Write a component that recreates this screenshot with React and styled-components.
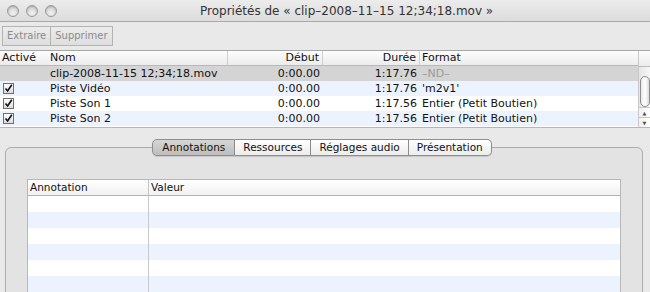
import styled, { createGlobalStyle } from 'styled-components'

const GlobalStyle = createGlobalStyle`
    html, body {
        margin: 0;
        padding: 0;
        background: #e8e8e8;
    }
    body {
        font-family: "DejaVu Sans", "Liberation Sans", sans-serif;
        color: #111;
    }
`

const Window = styled.div`
    width: 650px;
    height: 292px;
    overflow: hidden;
    background: #e8e8e8;
    display: flex;
    flex-direction: column;
`

const TitleBar = styled.div`
    height: 21px;
    display: flex;
    align-items: center;
    background: linear-gradient(#ececec, #dcdcdc);
    border-bottom: 1px solid #a9a9a9;
    padding: 1px 0 0 7px;
    box-sizing: border-box;
    height: 22px;
`

const Lights = styled.div`
    display: flex;
    gap: 7px;
`

const Light = styled.span`
    width: 10px;
    height: 10px;
    border-radius: 50%;
    border: 1px solid #9a9a9a;
    background: radial-gradient(circle at 50% 70%, #f4f4f4, #cfcfcf 70%, #bdbdbd);
    box-shadow: inset 0 1px 1px rgba(0, 0, 0, 0.15);
`

const Title = styled.div`
    flex: 1;
    padding-left: 143px;
    font-size: 12px;
    color: #333;
    white-space: nowrap;
`

const Toolbar = styled.div`
    height: 29px;
    display: flex;
    align-items: flex-start;
    padding: 4px 0 0 2px;
    box-sizing: border-box;
    background: #e9e9e9;
    border-bottom: 1px solid #a6a6a6;
`

const ButtonGroup = styled.div`
    display: flex;
    border: 1px solid #b3b3b3;
    background: linear-gradient(#ececec, #dedede);
`

const ToolButton = styled.span`
    height: 18px;
    line-height: 18px;
    padding: 0 ${(p) => p.$pad}px;
    font-size: 10px;
    color: #8c8c8c;
    border-left: ${(p) => (p.$first ? 'none' : '1px solid #b3b3b3')};
`

const Tracks = styled.div`
    display: flex;
    height: 76px;
    background: #fff;
    border-bottom: 1px solid #b6b6b6;
`

const TrackTable = styled.div`
    width: 638px;
    display: grid;
    grid-template-columns: 48px 180px 95px 97px 218px;
    grid-auto-rows: 15px;
    font-size: 11px;
    line-height: 15px;
`

const HeadCell = styled.div`
    background: linear-gradient(#fdfdfd, #ececec);
    border-bottom: 1px solid #b9b9b9;
    border-right: ${(p) => (p.$sep ? '1px solid #cfcfcf' : 'none')};
    padding: 0 ${(p) => (p.$right ? '3px' : '0')} 0 ${(p) => (p.$right ? '0' : p.$indent || 2)}px;
    text-align: ${(p) => (p.$right ? 'right' : 'left')};
    white-space: nowrap;
    overflow: hidden;
    line-height: 14px;
`

const Cell = styled.div`
    background: ${(p) => p.$bg};
    color: ${(p) => p.$color || '#111'};
    text-align: ${(p) => (p.$right ? 'right' : 'left')};
    padding: ${(p) => (p.$right ? '0 3px 0 0' : `0 0 0 ${p.$indent || 2}px`)};
    white-space: nowrap;
    overflow: hidden;
    display: flex;
    align-items: center;
    justify-content: ${(p) => (p.$right ? 'flex-end' : 'flex-start')};
`

const Check = styled.span`
    width: 9px;
    height: 9px;
    margin-left: 1px;
    border: 1px solid #6f6f6f;
    background: linear-gradient(#ffffff, #dcdcdc);
    display: flex;
    align-items: center;
    justify-content: center;
`

const Scrollbar = styled.div`
    width: 12px;
    display: flex;
    flex-direction: column;
    border-left: 1px solid #c8c8c8;
    background: #f2f2f2;
`

const ScrollCorner = styled.div`
    height: 15px;
    background: linear-gradient(#fdfdfd, #ececec);
    border-bottom: 1px solid #b9b9b9;
`

const ScrollTrack = styled.div`
    flex: 1;
    padding-top: 9px;
    display: flex;
    justify-content: center;
    background: linear-gradient(90deg, #e6e6e6, #f7f7f7);
`

const Thumb = styled.div`
    width: 8px;
    height: 29px;
    border-radius: 5px;
    border: 1px solid #8d8d8d;
    background: linear-gradient(90deg, #e9e9e9, #ffffff 50%, #dcdcdc);
`

const Arrow = styled.div`
    height: 9px;
    display: flex;
    align-items: center;
    justify-content: center;
    border-top: 1px solid #c6c6c6;
    background: linear-gradient(90deg, #f0f0f0, #ffffff);
    font-size: 5px;
    color: #555;
`

const Lower = styled.div`
    flex: 1;
    padding: 11px 7px 0 5px;
    background: #e9e9e9;
    overflow: hidden;
`

const TabStrip = styled.div`
    display: flex;
    justify-content: center;
    position: relative;
    z-index: 1;
    padding-right: 4px;
`

const Tab = styled.div`
    height: 15px;
    line-height: 15px;
    padding: 0 ${(p) => p.$pad}px;
    font-size: 10.5px;
    color: #111;
    border: 1px solid #8e8e8e;
    border-left: ${(p) => (p.$first ? '1px solid #8e8e8e' : 'none')};
    border-radius: ${(p) => (p.$first ? '5px 0 0 5px' : p.$last ? '0 5px 5px 0' : '0')};
    background: ${(p) =>
        p.$active ? 'linear-gradient(#d6d6d6, #bdbdbd)' : 'linear-gradient(#ffffff, #ececec)'};
    box-shadow: 0 1px 1px rgba(0, 0, 0, 0.12);
`

const TabBox = styled.div`
    margin-top: -9px;
    height: 300px;
    border: 1px solid #acacac;
    border-radius: 6px 6px 0 0;
    background: #e3e3e3;
    padding: 31px 21px 0 21px;
`

const AnnotTable = styled.div`
    display: grid;
    grid-template-columns: 121px 1fr;
    grid-auto-rows: 16px;
    background: #fff;
    border: 1px solid #b8b8b8;
    border-bottom: none;
    font-size: 10.5px;
`

const AnnotHead = styled.div`
    height: 15px;
    line-height: 15px;
    padding-left: 2px;
    background: linear-gradient(#ffffff, #f1f1f1);
    border-bottom: 1px solid #b4b4b4;
    border-right: ${(p) => (p.$sep ? '1px solid #c4c4c4' : 'none')};
`

const AnnotCell = styled.div`
    background: ${(p) => (p.$alt ? '#edf3fe' : '#ffffff')};
    border-right: ${(p) => (p.$sep ? '1px solid #c8c8c8' : 'none')};
`

const CheckMark = () => (
    <svg width="9" height="9" viewBox="0 0 9 9">
        <path d="M1.5 4.5 L3.6 7 L7.8 0.8" fill="none" stroke="#111" strokeWidth="1.6" />
    </svg>
)

const rows = [
    { check: false, name: 'clip-2008-11-15 12;34;18.mov', start: '0:00.00', dur: '1:17.76', format: '–ND–', bg: '#d4d4d4', dim: true },
    { check: true, name: 'Piste Vidéo', start: '0:00.00', dur: '1:17.76', format: "'m2v1'", bg: '#edf3fe' },
    { check: true, name: 'Piste Son 1', start: '0:00.00', dur: '1:17.56', format: 'Entier (Petit Boutien)', bg: '#ffffff' },
    { check: true, name: 'Piste Son 2', start: '0:00.00', dur: '1:17.56', format: 'Entier (Petit Boutien)', bg: '#edf3fe' },
]

const tabs = [
    { label: 'Annotations', pad: 9, active: true },
    { label: 'Ressources', pad: 8 },
    { label: 'Réglages audio', pad: 8 },
    { label: 'Présentation', pad: 8 },
]

const App = () => {
    return (
        <Window>
            <GlobalStyle />
            <TitleBar>
                <Lights>
                    <Light />
                    <Light />
                    <Light />
                </Lights>
                <Title>Propriétés de « clip–2008–11–15 12;34;18.mov »</Title>
            </TitleBar>

            <Toolbar>
                <ButtonGroup>
                    <ToolButton $first $pad={4}>Extraire</ToolButton>
                    <ToolButton $pad={4}>Supprimer</ToolButton>
                </ButtonGroup>
            </Toolbar>

            <Tracks>
                <TrackTable>
                    <HeadCell>Activé</HeadCell>
                    <HeadCell $sep $indent={2}>Nom</HeadCell>
                    <HeadCell $sep $right>Début</HeadCell>
                    <HeadCell $sep $right>Durée</HeadCell>
                    <HeadCell>Format</HeadCell>
                    {rows.map((r) => (
                        <>
                            <Cell key={r.name + 'c'} $bg={r.bg}>
                                {r.check && (
                                    <Check>
                                        <CheckMark />
                                    </Check>
                                )}
                            </Cell>
                            <Cell key={r.name} $bg={r.bg}>{r.name}</Cell>
                            <Cell key={r.name + 's'} $bg={r.bg} $right>{r.start}</Cell>
                            <Cell key={r.name + 'd'} $bg={r.bg} $right>{r.dur}</Cell>
                            <Cell key={r.name + 'f'} $bg={r.bg} $color={r.dim ? '#9a9a9a' : '#111'}>{r.format}</Cell>
                        </>
                    ))}
                </TrackTable>
                <Scrollbar>
                    <ScrollCorner />
                    <ScrollTrack>
                        <Thumb />
                    </ScrollTrack>
                    <Arrow>▲</Arrow>
                    <Arrow>▼</Arrow>
                </Scrollbar>
            </Tracks>

            <Lower>
                <TabStrip>
                    {tabs.map((t, i) => (
                        <Tab key={t.label} $pad={t.pad} $active={t.active} $first={i === 0} $last={i === tabs.length - 1}>
                            {t.label}
                        </Tab>
                    ))}
                </TabStrip>
                <TabBox>
                    <AnnotTable>
                        <AnnotHead $sep>Annotation</AnnotHead>
                        <AnnotHead>Valeur</AnnotHead>
                        {[0, 1, 2, 3, 4, 5, 6].map((i) => (
                            <>
                                <AnnotCell key={'a' + i} $alt={i % 2 === 1} $sep />
                                <AnnotCell key={'v' + i} $alt={i % 2 === 1} />
                            </>
                        ))}
                    </AnnotTable>
                </TabBox>
            </Lower>
        </Window>
    )
}

export default App
